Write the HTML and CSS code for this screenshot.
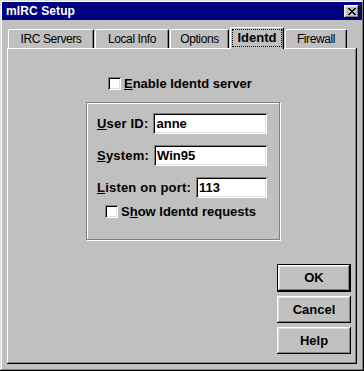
FILE: index.html
```html
<!DOCTYPE html>
<html>
<head>
<meta charset="utf-8">
<title>mIRC Setup</title>
<link rel="stylesheet" href="styles.css">
</head>
<body>
<div class="window">
  <div class="titlebar">
    <span class="title">mIRC Setup</span>
    <span class="close-btn">
      <svg width="8" height="7" viewBox="0 0 8 7" shape-rendering="crispEdges">
        <path d="M0 0h2v1h-2zM6 0h2v1h-2zM1 1h2v1h-2zM5 1h2v1h-2zM2 2h4v1h-4zM3 3h2v1h-2zM2 4h4v1h-4zM1 5h2v1h-2zM5 5h2v1h-2zM0 6h2v1h-2zM6 6h2v1h-2z" fill="#000"/>
      </svg>
    </span>
  </div>
  <div class="content">
    <div class="tabs">
      <div class="tab tab-servers">IRC Servers</div>
      <div class="tab tab-local">Local Info</div>
      <div class="tab tab-options">Options</div>
      <div class="tab tab-identd active"><span class="focus">Identd</span></div>
      <div class="tab tab-firewall">Firewall</div>
    </div>
    <div class="panel">
      <label class="check-row enable-row">
        <span class="checkbox"></span>
        <span class="check-label"><u>E</u>nable Identd server</span>
      </label>
      <div class="group">
        <div class="field-row">
          <span class="field-label"><u>U</u>ser ID:</span>
          <span class="input">anne</span>
        </div>
        <div class="field-row">
          <span class="field-label"><u>S</u>ystem:</span>
          <span class="input">Win95</span>
        </div>
        <div class="field-row">
          <span class="field-label"><u>L</u>isten on port:</span>
          <span class="input">113</span>
        </div>
        <label class="check-row show-row">
          <span class="checkbox"></span>
          <span class="check-label">S<u>h</u>ow Identd requests</span>
        </label>
      </div>
      <div class="buttons">
        <div class="default-wrap"><div class="btn">OK</div></div>
        <div class="btn">Cancel</div>
        <div class="btn">Help</div>
      </div>
    </div>
  </div>
</div>
</body>
</html>
```
FILE: styles.css
```css
* { box-sizing: border-box; }
html, body {
  margin: 0;
  padding: 0;
  background: #c0c0c0;
}
body {
  font-family: "Liberation Sans", Arial, sans-serif;
  font-size: 13px;
  font-weight: bold;
  color: #000;
}
.window {
  width: 364px;
  height: 371px;
  padding: 2px;
  background: #c0c0c0;
  box-shadow: inset -1px -1px #000, inset 1px 1px #dfdfdf, inset -2px -2px #808080, inset 2px 2px #fff;
  display: flex;
  flex-direction: column;
}
.titlebar {
  height: 18px;
  background: #000080;
  color: #fff;
  display: flex;
  align-items: center;
  justify-content: space-between;
  padding: 0 3px 0 4px;
}
.title {
  font-size: 12px;
  font-weight: bold;
  line-height: 18px;
  letter-spacing: 0.1px;
}
.close-btn {
  width: 15px;
  height: 13px;
  background: #c0c0c0;
  box-shadow: inset -1px -1px #000, inset 1px 1px #fff, inset -2px -2px #808080, inset 2px 2px #dfdfdf;
  display: flex;
  align-items: center;
  justify-content: center;
}
.close-btn svg { display: block; }
.content {
  flex: 1;
  padding: 7px 5px 5px 5px;
  display: flex;
  flex-direction: column;
}
.tabs {
  height: 21px;
  display: flex;
  align-items: flex-start;
  gap: 1px;
  padding-left: 1px;
}
.tab {
  margin-top: 2px;
  height: 19px;
  font-family: "Liberation Sans", Arial, sans-serif;
  font-weight: normal;
  font-size: 12px;
  letter-spacing: -0.4px;
  line-height: 18px;
  text-align: center;
  border-left: 1px solid #fff;
  border-top: 1px solid #fff;
  border-right: 1px solid #000;
  border-radius: 2px 2px 0 0;
  box-shadow: inset -1px 0 #808080;
  background: #c0c0c0;
}
.tab-servers { width: 86px; }
.tab-local { width: 74px; }
.tab-options { width: 59px; }
.tab-identd { width: 54px; }
.tab-firewall { width: 62px; }
.tab.active {
  margin-top: 0;
  height: 22px;
  font-size: 13px;
  letter-spacing: 0;
  font-weight: bold;
  position: relative;
  z-index: 1;
  padding: 1px 1px 2px 1px;
  line-height: 17px;
}
.focus {
  display: block;
  height: 18px;
  border: 1px dotted #000;
  line-height: 16px;
}
.panel {
  flex: 1;
  background: #c0c0c0;
  box-shadow: inset -1px -1px #000, inset 1px 1px #fff, inset -2px -2px #808080;
  display: flex;
  flex-direction: column;
  padding-top: 29px;
}
.check-row {
  display: flex;
  align-items: center;
  height: 13px;
  line-height: 13px;
}
.enable-row {
  margin-left: 101px;
}
.checkbox {
  width: 13px;
  height: 13px;
  background: #fff;
  box-shadow: inset 1px 1px #808080, inset -1px -1px #fff, inset 2px 2px #000, inset -2px -2px #dfdfdf;
  flex: none;
}
.check-label {
  margin-left: 3px;
  white-space: nowrap;
}
.group {
  margin: 12px 0 0 79px;
  width: 194px;
  height: 138px;
  border: 1px solid #808080;
  box-shadow: inset 1px 1px #fff, 1px 1px #fff;
  padding: 10px 12px 0 9px;
  display: flex;
  flex-direction: column;
  gap: 11px;
}
.field-row {
  display: flex;
  align-items: center;
  height: 21px;
  gap: 5px;
}
.field-label {
  white-space: nowrap;
  padding-left: 1px;
  letter-spacing: 0.2px;
}
.input {
  flex: 1;
  height: 21px;
  background: #fff;
  box-shadow: inset 1px 1px #808080, inset -1px -1px #fff, inset 2px 2px #000, inset -2px -2px #dfdfdf;
  padding: 0 3px;
  line-height: 21px;
}
.show-row {
  margin-top: -4px;
  margin-left: 9px;
}
.buttons {
  align-self: flex-end;
  margin: 24px 6px 0 0;
  width: 74px;
  display: flex;
  flex-direction: column;
  gap: 4px;
}
.btn {
  height: 27px;
  line-height: 27px;
  text-align: center;
  background: #c0c0c0;
  box-shadow: inset -1px -1px #000, inset 1px 1px #fff, inset -2px -2px #808080, inset 2px 2px #dfdfdf;
}
.default-wrap {
  border: 1px solid #000;
  height: 28px;
}
.default-wrap .btn {
  height: 26px;
  line-height: 26px;
}
```
